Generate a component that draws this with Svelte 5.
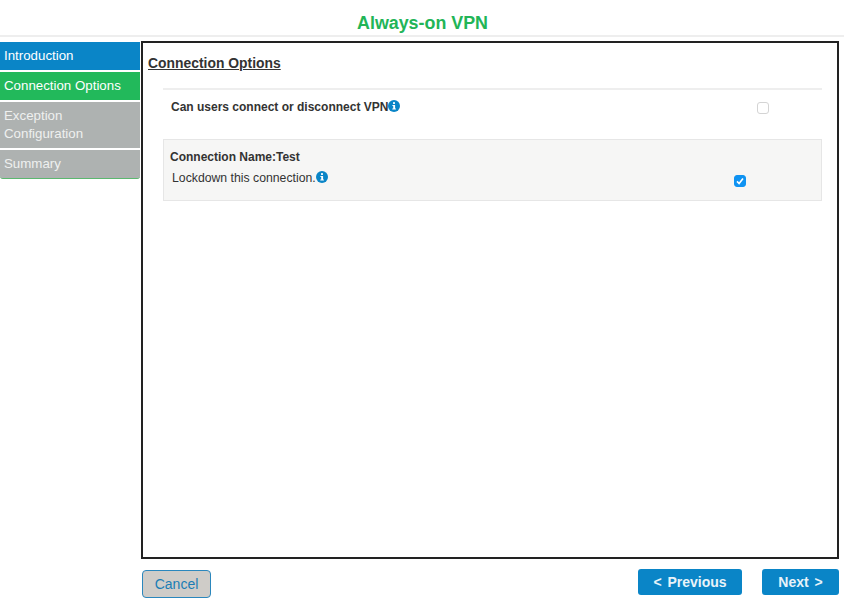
<script>
  const steps = [
    { label: 'Introduction', cls: 'done' },
    { label: 'Connection Options', cls: 'current' },
    { label: 'Exception Configuration', cls: 'todo' },
    { label: 'Summary', cls: 'todo last' }
  ];
</script>

<div class="wizard">
  <h1 class="title">Always-on VPN</h1>
  <div class="body">
    <nav class="steps">
      {#each steps as step}
        <div class="step {step.cls}">{step.label}</div>
      {/each}
    </nav>
    <div class="main">
      <section class="panel">
        <h2 class="heading">Connection Options</h2>
        <div class="row-top">
          <span class="strong">Can users connect or disconnect VPN{@render info()}</span>
          <span class="box"></span>
        </div>
        <div class="conn">
          <div class="conn-name">Connection Name:Test</div>
          <div class="conn-row">
            <span class="lock">Lockdown this connection.{@render info()}</span>
            <span class="box checked">
              <svg viewBox="0 0 12 12" width="12" height="12"><path d="M3 6.4l2.1 2.2L9 3.6" fill="none" stroke="#fff" stroke-width="1.6"/></svg>
            </span>
          </div>
        </div>
      </section>
      <footer class="actions">
        <button class="cancel">Cancel</button>
        <div class="nav">
          <button class="primary prev">&lt; Previous</button>
          <button class="primary next">Next &gt;</button>
        </div>
      </footer>
    </div>
  </div>
</div>

{#snippet info()}
  <svg class="info" viewBox="0 0 12 12" width="12" height="12">
    <circle cx="6" cy="6" r="6" fill="#0a85c7"/>
    <rect x="5" y="2.2" width="2" height="1.7" fill="#fff"/>
    <path d="M4.4 5h2.7v3.6h.8v1H4.3v-1h.9V6h-.8z" fill="#fff"/>
  </svg>
{/snippet}

<style>
  :global(body) { background: #fff; }
  .wizard { width: 844px; height: 600px; overflow: hidden; font-family: "Liberation Sans", Arial, sans-serif; color: #333; }
  .title { margin: 0; height: 37px; box-sizing: border-box; padding-top: 12px; padding-left: 1px; text-align: center; font-size: 17.85px; line-height: 22px; font-weight: bold; color: #22b557; border-bottom: 2px solid #eee; }
  .body { display: flex; padding-top: 4px; }
  .steps { width: 140px; flex: none; padding-top: 1px; }
  .step { box-sizing: border-box; padding: 0 4px; font-size: 13.3px; line-height: 18px; color: #fff; margin-bottom: 2px; }
  .done { background: #0a85c7; height: 28px; padding-top: 5px; }
  .current { background: #22b95b; height: 28px; padding-top: 5px; }
  .todo { background: #aeb2b1; color: #eef0ef; height: 28px; padding-top: 5px; }
  .step:nth-child(3) { height: 46px; padding-top: 5px; }
  .last { height: 29px; border-bottom: 1px solid #5cb870; border-radius: 0 0 3px 3px; margin-bottom: 0; }
  .main { margin-left: 1px; width: 698px; }
  .panel { box-sizing: border-box; height: 518px; border: 2px solid #222; padding: 11px 15px 0 5px; }
  .heading { margin: 0; font-size: 13.9px; line-height: 18px; font-weight: bold; color: #333; text-decoration: underline; }
  .row-top { margin: 16px 0 0 15px; border-top: 2px solid #eee; height: 51px; display: flex; justify-content: space-between; padding: 9px 53px 0 8px; box-sizing: border-box; }
  .strong { font-size: 12px; line-height: 16px; font-weight: bold; }
  .info { vertical-align: -1px; margin-left: 0; }
  .box { width: 12px; height: 12px; box-sizing: border-box; border: 1px solid #d4d4d4; border-radius: 3px; background: #fff; margin-top: 3px; display: block; }
  .checked { background: #0f93f2; border-color: #0f93f2; margin-top: 4px; display: flex; align-items: center; justify-content: center; }
  .checked svg { flex: none; }
  .conn { margin-left: 15px; height: 62px; box-sizing: border-box; background: #f6f6f5; border: 1px solid #e6e6e6; padding: 10px 6px 0 6px; }
  .conn-name { font-size: 12px; line-height: 15px; font-weight: bold; }
  .conn-row { display: flex; justify-content: space-between; margin-top: 6px; padding: 0 69px 0 2px; }
  .lock { font-size: 12.25px; line-height: 15px; }
  .actions { display: flex; justify-content: space-between; margin-top: 11px; padding-left: 1px; }
  button { font-family: inherit; box-sizing: border-box; cursor: pointer; }
  .cancel { width: 69px; height: 28px; border: 1px solid #2b87bd; border-radius: 4px; background: #cfccc8; color: #1a7db5; font-size: 14px; padding: 0; }
  .nav { display: flex; gap: 20px; margin-top: -1px; }
  .primary { height: 26px; border: none; border-radius: 3px; background: #0a85c7; color: #e8f3f9; font-size: 14px; font-weight: bold; padding: 0; word-spacing: 2px; }
  .prev { width: 104px; }
  .next { width: 77px; }
</style>
